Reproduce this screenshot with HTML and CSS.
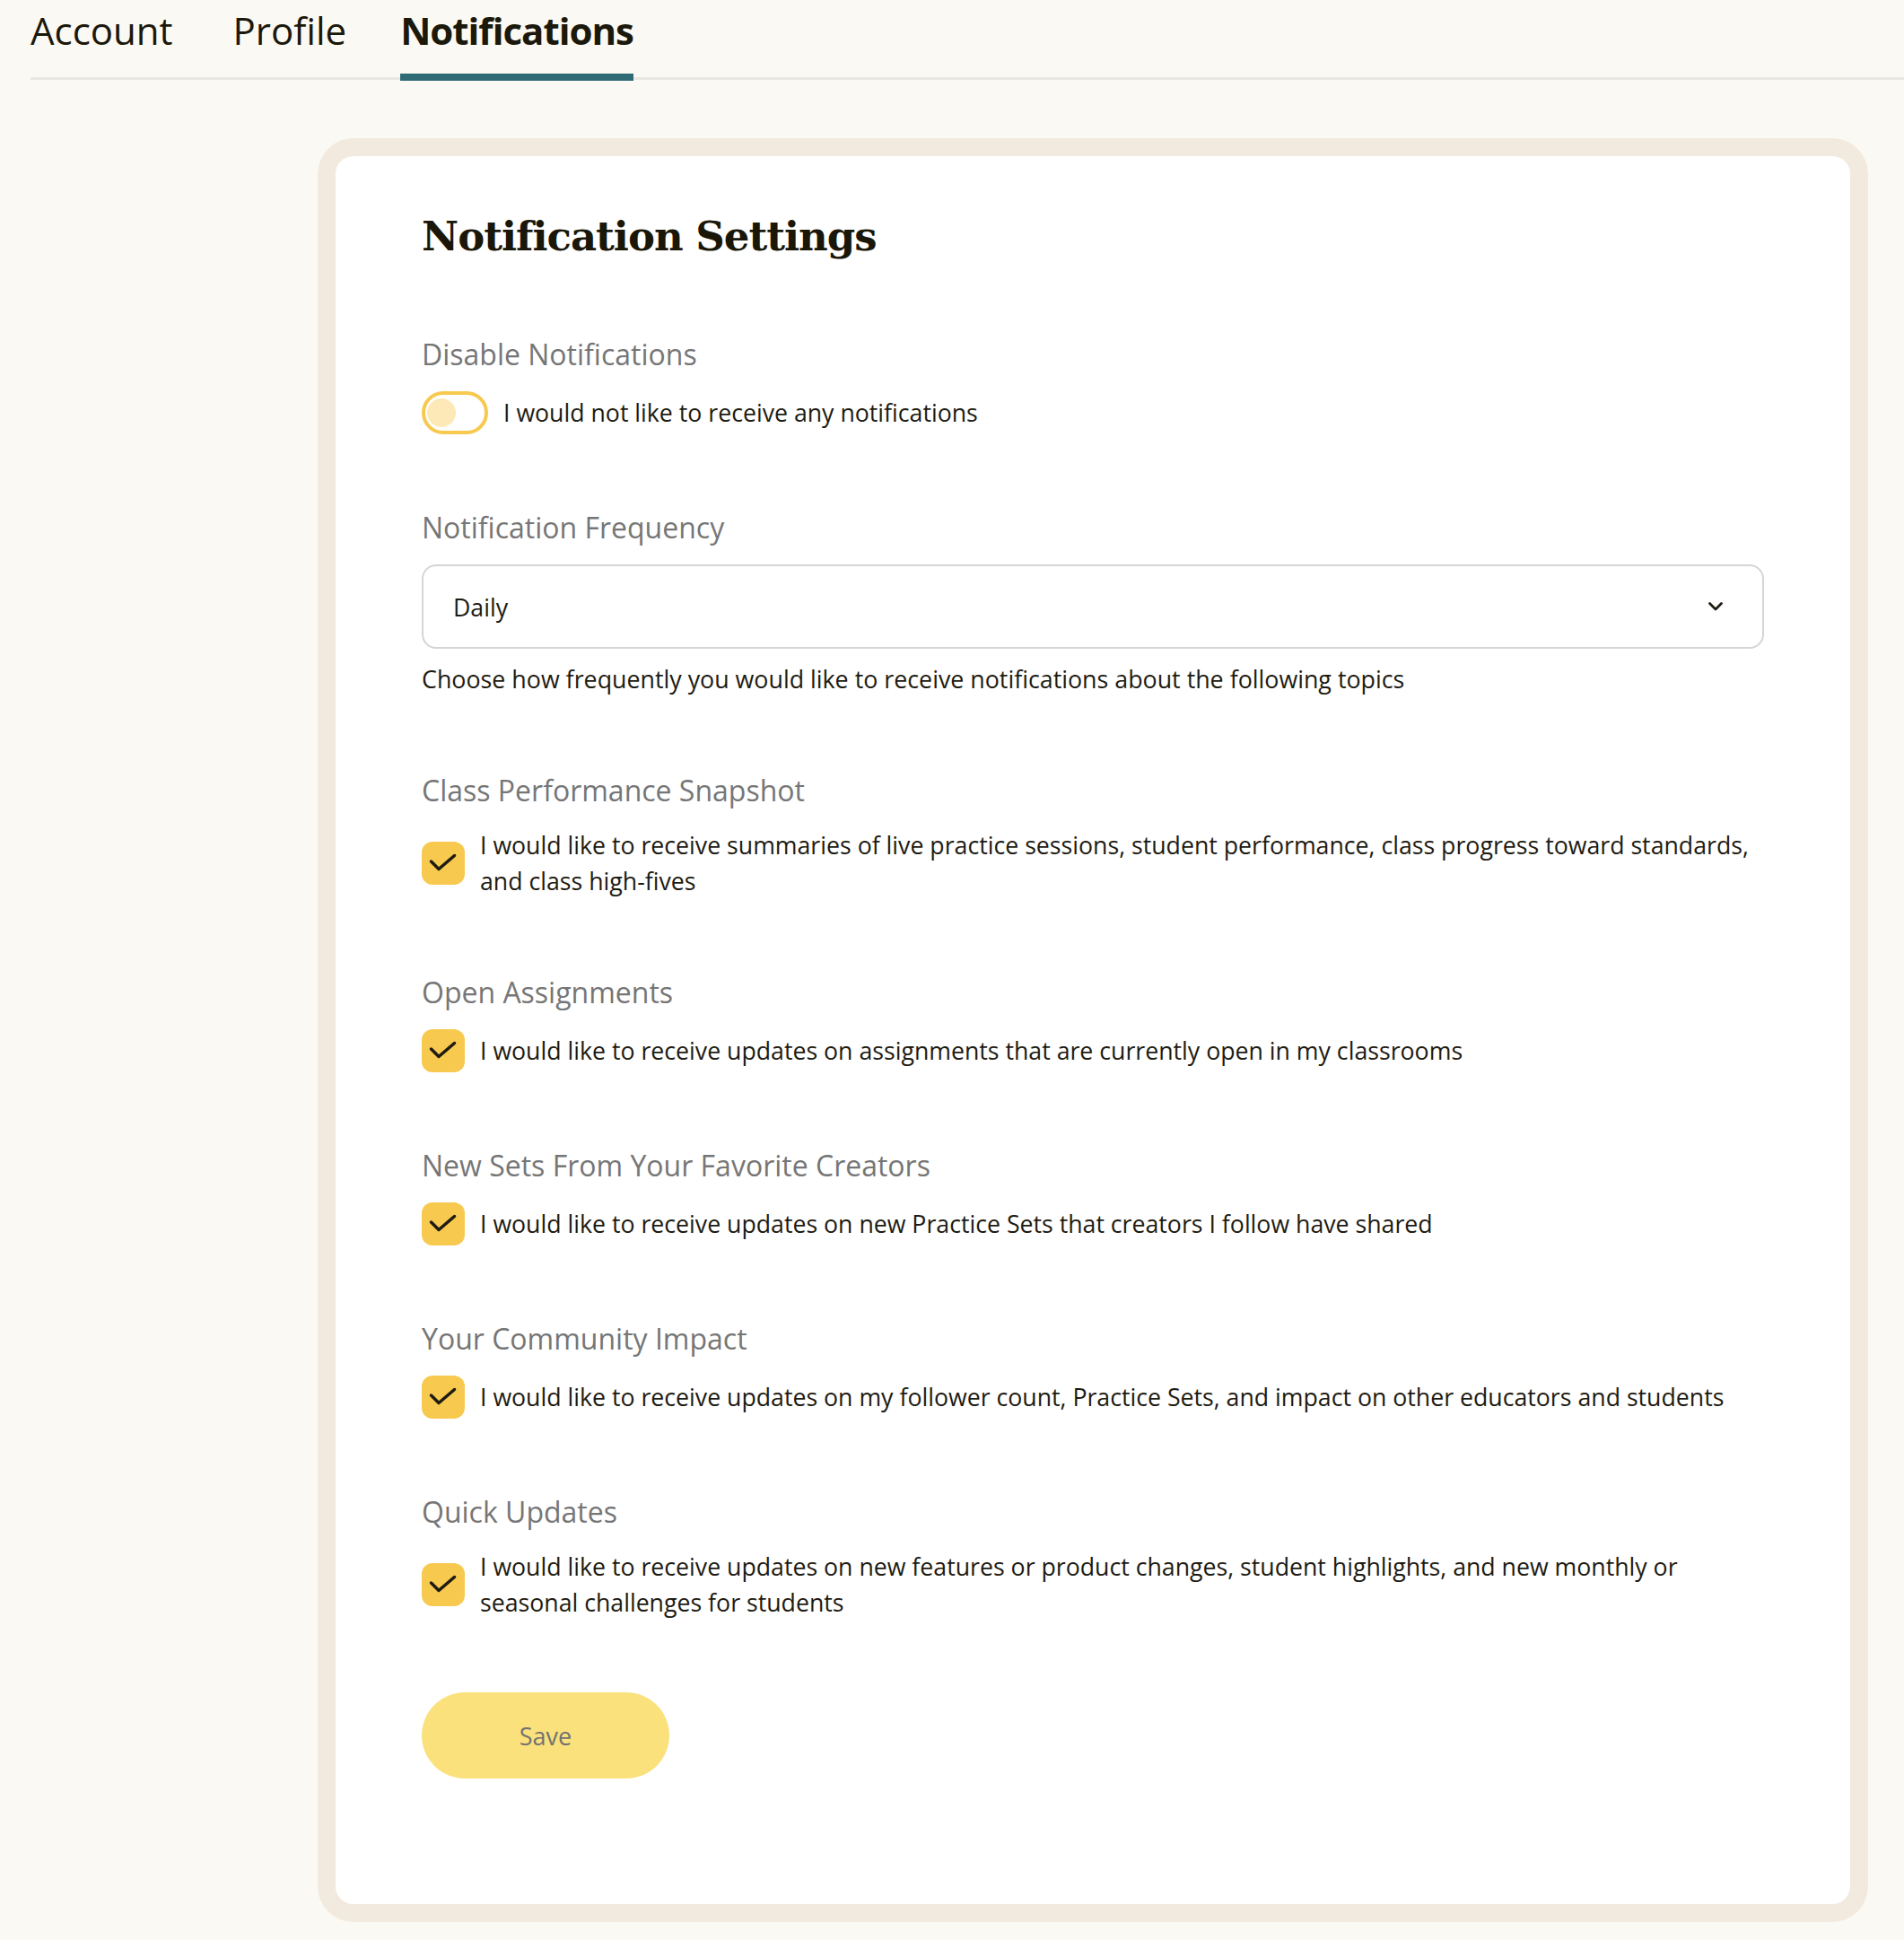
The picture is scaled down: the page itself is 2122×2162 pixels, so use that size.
FILE: index.html
```html
<!DOCTYPE html>
<html lang="en">
<head>
    <meta charset="UTF-8">
    <meta name="viewport" content="width=device-width, initial-scale=1.0">
    <title>Notification Settings</title>
    <link rel="stylesheet" href="styles.css">
</head>
<body>
    <nav class="tabs">
        <a class="tab" href="#">Account</a>
        <a class="tab" href="#">Profile</a>
        <a class="tab active" href="#">Notifications</a>
    </nav>

    <main class="page">
        <section class="card-frame">
            <div class="card">
                <h1>Notification Settings</h1>

                <div class="field">
                    <h2 class="field-label">Disable Notifications</h2>
                    <label class="toggle-row">
                        <span class="toggle"><span class="knob"></span></span>
                        <span>I would not like to receive any notifications</span>
                    </label>
                </div>

                <div class="field">
                    <h2 class="field-label">Notification Frequency</h2>
                    <div class="select">
                        <span>Daily</span>
                        <svg width="18" height="12" viewBox="0 0 18 12" fill="none" stroke="currentColor" stroke-width="2.8" stroke-linecap="round" stroke-linejoin="round">
                            <path d="M2.5 2.5l6.5 6.5 6.5-6.5"/>
                        </svg>
                    </div>
                    <p class="hint">Choose how frequently you would like to receive notifications about the following topics</p>
                </div>

                <div class="field">
                    <h2 class="field-label">Class Performance Snapshot</h2>
                    <label class="check-row">
                        <span class="checkbox">
                            <svg width="48" height="48" viewBox="0 0 48 48" fill="none" stroke="currentColor" stroke-width="3.5" stroke-linecap="round" stroke-linejoin="round"><polyline points="10.5,22 19,30.5 36.5,15.5"/></svg>
                        </span>
                        <span>I would like to receive summaries of live practice sessions, student performance, class progress toward standards, and class high-fives</span>
                    </label>
                </div>

                <div class="field">
                    <h2 class="field-label">Open Assignments</h2>
                    <label class="check-row">
                        <span class="checkbox">
                            <svg width="48" height="48" viewBox="0 0 48 48" fill="none" stroke="currentColor" stroke-width="3.5" stroke-linecap="round" stroke-linejoin="round"><polyline points="10.5,22 19,30.5 36.5,15.5"/></svg>
                        </span>
                        <span>I would like to receive updates on assignments that are currently open in my classrooms</span>
                    </label>
                </div>

                <div class="field">
                    <h2 class="field-label">New Sets From Your Favorite Creators</h2>
                    <label class="check-row">
                        <span class="checkbox">
                            <svg width="48" height="48" viewBox="0 0 48 48" fill="none" stroke="currentColor" stroke-width="3.5" stroke-linecap="round" stroke-linejoin="round"><polyline points="10.5,22 19,30.5 36.5,15.5"/></svg>
                        </span>
                        <span>I would like to receive updates on new Practice Sets that creators I follow have shared</span>
                    </label>
                </div>

                <div class="field">
                    <h2 class="field-label">Your Community Impact</h2>
                    <label class="check-row">
                        <span class="checkbox">
                            <svg width="48" height="48" viewBox="0 0 48 48" fill="none" stroke="currentColor" stroke-width="3.5" stroke-linecap="round" stroke-linejoin="round"><polyline points="10.5,22 19,30.5 36.5,15.5"/></svg>
                        </span>
                        <span>I would like to receive updates on my follower count, Practice Sets, and impact on other educators and students</span>
                    </label>
                </div>

                <div class="field">
                    <h2 class="field-label">Quick Updates</h2>
                    <label class="check-row">
                        <span class="checkbox">
                            <svg width="48" height="48" viewBox="0 0 48 48" fill="none" stroke="currentColor" stroke-width="3.5" stroke-linecap="round" stroke-linejoin="round"><polyline points="10.5,22 19,30.5 36.5,15.5"/></svg>
                        </span>
                        <span>I would like to receive updates on new features or product changes, student highlights, and new monthly or seasonal challenges for students</span>
                    </label>
                </div>

                <button class="save">Save</button>
            </div>
        </section>
    </main>
</body>
</html>
```

FILE: styles.css
```css
:root {
    --page: #fbf9f3;
    --frame: #f2eadf;
    --ink: #1e1b12;
    --muted: #767676;
    --yellow: #f7c94f;
    --teal: #2e6b74;
}

body {
    margin: 0;
    background: var(--page);
    color: var(--ink);
    font-family: "Open Sans", "Liberation Sans", sans-serif;
}

/* tabs */
.tabs {
    display: flex;
    gap: 60px;
    margin-left: 34px;
    border-bottom: 3px solid #e8e7e3;
}

.tab {
    font-size: 42px;
    line-height: 60px;
    padding: 4px 0 18px;
    border-bottom: 8px solid transparent;
    margin-bottom: -4px;
    color: #1b180c;
    text-decoration: none;
}

.tab:first-child {
    margin-right: 7px;
}

.tab.active {
    font-weight: 700;
    letter-spacing: -1px;
    border-bottom-color: var(--teal);
}

/* card */
.page {
    padding: 65px 40px 19px 354px;
}

.card-frame {
    background: var(--frame);
    padding: 20px;
    border-radius: 40px;
}

.card {
    background: #fff;
    border-radius: 20px;
    padding: 63px 96px 140px;
}

h1 {
    margin: 0;
    font-family: "DejaVu Serif", serif;
    font-weight: 700;
    font-size: 45px;
    line-height: 54px;
    letter-spacing: -1px;
    color: #1a1708;
}

.field {
    margin-top: 84px;
}

.field-label {
    margin: 0 0 21px;
    font-size: 32px;
    line-height: 40px;
    font-weight: 400;
    color: var(--muted);
}

/* toggle */
.toggle-row,
.check-row {
    display: flex;
    align-items: center;
    gap: 17px;
    font-size: 26.7px;
    line-height: 40px;
}

.toggle {
    flex: none;
    display: flex;
    align-items: center;
    width: 74px;
    height: 48px;
    box-sizing: border-box;
    padding: 0 2px;
    border: 4px solid var(--yellow);
    border-radius: 24px;
}

.knob {
    width: 32px;
    height: 32px;
    border-radius: 50%;
    background: #fde9b7;
}

/* select */
.select {
    display: flex;
    align-items: center;
    justify-content: space-between;
    height: 94px;
    box-sizing: border-box;
    padding: 0 43px 0 33px;
    border: 2px solid #d5d5d5;
    border-radius: 16px;
    font-size: 26.7px;
}

.hint {
    margin: 14px 0 0;
    font-size: 26.8px;
    line-height: 40px;
}

/* checkbox */
.checkbox {
    flex: none;
    display: flex;
    width: 48px;
    height: 48px;
    border-radius: 12px;
    background: var(--yellow);
    color: var(--ink);
}

.save {
    display: block;
    margin-top: 80px;
    width: 276px;
    height: 96px;
    border: none;
    border-radius: 48px;
    background: #fae17b;
    color: #727272;
    font-family: inherit;
    font-size: 27px;
}
```
